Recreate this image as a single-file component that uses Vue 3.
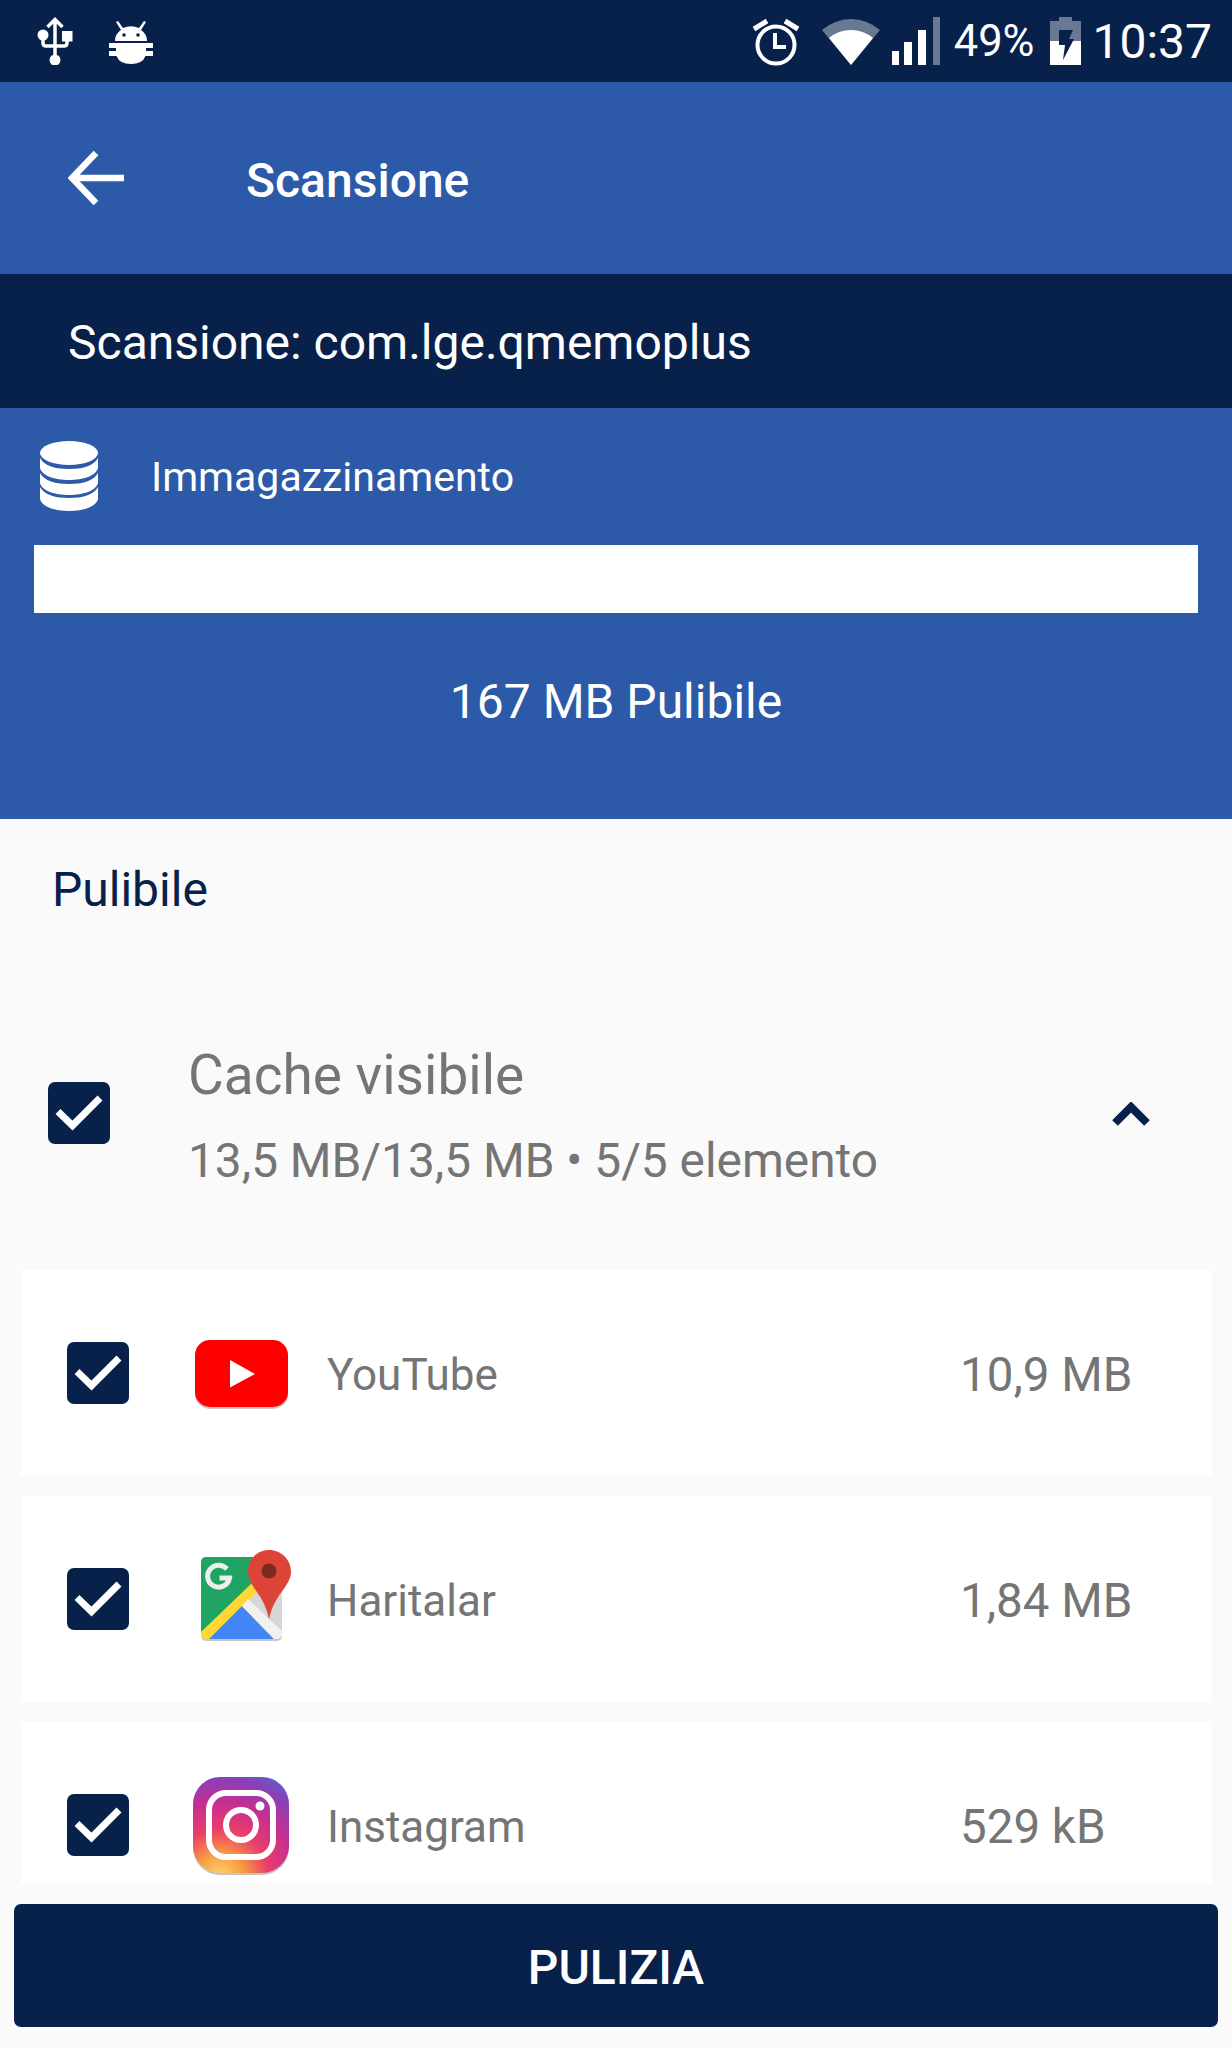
<template>
  <div class="page">
    <div class="status-bar">
      <div class="status-left">
        <svg width="36" height="48" viewBox="0 0 36 48">
          <path d="M18 4v40M10.500 10l7.500-7.500 7.500 7.500M6 20v6q0 3 3 3h18q3 0 3-3v-4" fill="none" stroke="#fff" stroke-width="3.500"/>
          <circle cx="6" cy="18" r="5.500" fill="#fff"/>
          <rect x="25" y="14" width="10.500" height="10.500" fill="#fff"/>
          <circle cx="18" cy="43" r="5.500" fill="#fff"/>
        </svg>
        <svg width="44" height="46" viewBox="0 0 44 46">
          <path d="M9 3l5 7a16 12 0 0 1 16 0l5-7 2 1-5 8q6 4 6 11h-32q0-7 6-11l-5-8z" fill="#fff"/>
          <circle cx="15" cy="17" r="1.800" fill="#08214a"/>
          <circle cx="29" cy="17" r="1.800" fill="#08214a"/>
          <path d="M0 25h44v5h-7v3h7v5h-7.500q-3 8-14.500 8t-14.500-8h-7.500v-5h7v-3h-7z" fill="#fff"/>
        </svg>
      </div>
      <div class="status-right">
        <svg class="ic-alarm" width="48" height="49" viewBox="0 0 48 49">
          <circle cx="24" cy="28" r="18.500" fill="none" stroke="#fff" stroke-width="4"/>
          <path d="M23 16v14h11" fill="none" stroke="#fff" stroke-width="4"/>
          <path d="M2 12l13-8M46 12l-13-8" stroke="#fff" stroke-width="5"/>
        </svg>
        <svg class="ic-wifi" width="58" height="48" viewBox="0 0 58 48">
          <path d="M0 13a44 44 0 0 1 58 0l-29 35z" fill="#fff" fill-opacity="0.4"/>
          <path d="M7 21a34 34 0 0 1 44 0l-22 27z" fill="#fff"/>
        </svg>
        <svg class="ic-signal" width="48" height="48" viewBox="0 0 48 48">
          <rect x="0" y="34" width="7" height="14" fill="#fff"/>
          <rect x="12" y="25" width="8" height="23" fill="#fff"/>
          <rect x="26" y="13" width="8" height="35" fill="#fff"/>
          <rect x="41" y="0" width="7" height="48" fill="#fff" fill-opacity="0.4"/>
        </svg>
        <span class="pct">49%</span>
        <svg class="ic-batt" width="31" height="48" viewBox="0 0 31 48">
          <path d="M9 0h13v4h9v23h-31v-23h9z" fill="#fff" fill-opacity="0.4"/>
          <rect x="0" y="24" width="31" height="24" fill="#fff"/>
          <path d="M9 13h14l-4 9h5l-11 21 2-15h-6z" fill="#08214a"/>
        </svg>
        <span class="clock">10:37</span>
      </div>
    </div>

    <div class="app-bar">
      <svg class="back" width="56" height="56" viewBox="0 0 56 56">
        <path d="M28 3l-24 25 24 25M5 28h51" fill="none" stroke="#fff" stroke-width="6.500"/>
      </svg>
      <div class="app-title">Scansione</div>
    </div>

    <div class="scan-strip">Scansione: com.lge.qmemoplus</div>

    <div class="storage">
      <div class="storage-head">
        <svg width="60" height="70" viewBox="0 0 60 70">
          <ellipse cx="30" cy="12" rx="29" ry="12" fill="#fff"/>
          <path d="M1 17c4 8 16 11 29 11s25-3 29-11v10c-2 8-15 12-29 12s-27-4-29-12z" fill="#fff"/>
          <path d="M1 32c4 8 16 11 29 11s25-3 29-11v10c-2 8-15 12-29 12s-27-4-29-12z" fill="#fff"/>
          <path d="M1 46c4 8 16 11 29 11s25-3 29-11v12c-2 8-15 12-29 12s-27-4-29-12z" fill="#fff"/>
        </svg>
        <span class="storage-label">Immagazzinamento</span>
      </div>
      <div class="progress"></div>
      <div class="cleanable">167 MB Pulibile</div>
    </div>

    <div class="content">
      <div class="section-label">Pulibile</div>

      <div class="group-head">
        <span class="check">
          <svg width="62" height="62" viewBox="0 0 62 62">
            <path d="M10 29.500l14.500 14 27.500-27.500" fill="none" stroke="#fff" stroke-width="7"/>
          </svg>
        </span>
        <div class="group-text">
          <div class="group-title">Cache visibile</div>
          <div class="group-sub">13,5 MB/13,5 MB • 5/5 elemento</div>
        </div>
        <svg class="chevron" width="38" height="24" viewBox="0 0 38 24">
          <path d="M3 21l16-16 16 16" fill="none" stroke="#08214a" stroke-width="8"/>
        </svg>
      </div>

      <div class="list">
        <div v-for="item in items" :key="item.name" class="row">
          <span class="check">
            <svg width="62" height="62" viewBox="0 0 62 62">
              <path d="M10 29.500l14.500 14 27.500-27.500" fill="none" stroke="#fff" stroke-width="7"/>
            </svg>
          </span>
          <div class="app-icon">
            <svg v-if="item.icon === 'youtube'" width="96" height="70" viewBox="0 0 96 70">
              <rect x="2" y="2" width="93" height="67" rx="15" fill="#c9c9c9"/>
              <rect x="2" y="0" width="93" height="67" rx="15" fill="#ff0000"/>
              <path d="M37 20l25 14-25 13.500z" fill="#fff"/>
            </svg>
            <svg v-else-if="item.icon === 'maps'" class="maps" width="100" height="96" viewBox="0 -2 100 96">
              <rect x="8" y="8" width="81" height="82" rx="5" fill="#c8c8c8"/>
              <rect x="8" y="6" width="81" height="82" rx="5" fill="#d6d6d6"/>
              <path d="M13 6h50v26l-55 49v-70a5 5 0 0 1 5-5z" fill="#1fa463"/>
              <path d="M8 81l51-49 5 9-48 47h-3a5 5 0 0 1-5-5z" fill="#fdd835"/>
              <path d="M16 88l33-33 32 33z" fill="#4285f4"/>
              <path d="M49 55l6-7 34 32v3a5 5 0 0 1-5 5h-3z" fill="#f1f1f1"/>
              <path d="M34 18a11 11 0 1 0 2.500 9h-10" fill="none" stroke="#eee" stroke-width="5"/>
              <path d="M76 -1c12 0 22 9.500 22 21.500 0 15-18 24-22 48-4-24-21-33-21-48 0-12 9-21.500 21-21.500z" fill="#db4437"/>
              <circle cx="76" cy="20" r="7.500" fill="#7b2a20"/>
            </svg>
            <svg v-else width="96" height="100" viewBox="0 0 96 100">
              <defs>
                <radialGradient id="ig" cx="0.28" cy="1.05" r="1.2">
                  <stop offset="0" stop-color="#fdd778"/>
                  <stop offset="0.2" stop-color="#f9a03f"/>
                  <stop offset="0.42" stop-color="#ea3e6a"/>
                  <stop offset="0.65" stop-color="#c72f90"/>
                  <stop offset="0.85" stop-color="#8f3db5"/>
                  <stop offset="1" stop-color="#5b5fcf"/>
                </radialGradient>
              </defs>
              <rect x="0" y="2" width="96" height="96" rx="27" fill="#c4c4c4"/>
              <rect x="0" y="0" width="96" height="96" rx="27" fill="url(#ig)"/>
              <rect x="16" y="16" width="64" height="64" rx="17" fill="none" stroke="#fff" stroke-width="6"/>
              <circle cx="48" cy="48" r="15" fill="none" stroke="#fff" stroke-width="6"/>
              <circle cx="67" cy="29" r="4.500" fill="#fff"/>
            </svg>
          </div>
          <span class="row-name">{{ item.name }}</span>
          <span class="row-size">{{ item.size }}</span>
        </div>
      </div>
    </div>

    <div class="footer">
      <button class="clean-btn">PULIZIA</button>
    </div>
  </div>
</template>

<script setup>
const items = [
  { name: 'YouTube', size: '10,9 MB', icon: 'youtube' },
  { name: 'Haritalar', size: '1,84 MB', icon: 'maps' },
  { name: 'Instagram', size: '529 kB', icon: 'instagram' }
]
</script>

<style>
body {
  margin: 0;
  background: #fafafa;
}
</style>

<style scoped>
.page {
  width: 1232px;
  height: 2048px;
  display: flex;
  flex-direction: column;
  overflow: hidden;
  background: #fafafa;
  font-family: Roboto, "Noto Sans", sans-serif;
}

.status-bar {
  height: 82px;
  flex-shrink: 0;
  background: #08214a;
  display: flex;
  align-items: center;
  justify-content: space-between;
  padding: 0 20px 0 37px;
  box-sizing: border-box;
  color: #fff;
}

.status-left {
  display: flex;
  align-items: center;
  gap: 36px;
}

.status-right {
  display: flex;
  align-items: center;
}

.ic-alarm {
  margin-right: 22px;
}

.ic-wifi {
  margin-right: 12px;
}

.pct {
  font-size: 43.500px;
  margin-left: 14px;
  margin-right: 16px;
}

.clock {
  font-size: 48px;
  margin-left: 11px;
}

.app-bar {
  height: 192px;
  flex-shrink: 0;
  background: #2c5aa8;
  display: flex;
  align-items: center;
  padding-left: 68px;
  box-sizing: border-box;
  color: #fff;
}

.back {
  margin-right: 122px;
}

.app-title {
  font-size: 48px;
  font-weight: 500;
  padding-top: 4px;
}

.scan-strip {
  height: 134px;
  flex-shrink: 0;
  background: #08214a;
  color: #fff;
  font-size: 48px;
  display: flex;
  align-items: center;
  padding: 3px 0 0 68px;
  box-sizing: border-box;
}

.storage {
  height: 411px;
  flex-shrink: 0;
  background: #2c5aa8;
  color: #fff;
  padding: 33px 34px 0;
  box-sizing: border-box;
}

.storage-head {
  display: flex;
  align-items: center;
  gap: 52px;
  height: 70px;
  padding-left: 5px;
  font-size: 41px;
  margin-bottom: 34px;
}

.storage-label {
  padding-top: 2px;
}

.progress {
  height: 68px;
  background: #fff;
}

.cleanable {
  text-align: center;
  font-size: 48px;
  margin-top: 60px;
}

.content {
  flex: 1;
  min-height: 0;
  overflow: hidden;
  display: flex;
  flex-direction: column;
}

.section-label {
  color: #08214a;
  font-size: 48px;
  padding: 42px 0 0 52px;
  height: 98px;
  flex-shrink: 0;
}

.group-head {
  display: flex;
  align-items: center;
  height: 311px;
  flex-shrink: 0;
  box-sizing: border-box;
  padding: 0 0 3px 48px;
}

.check {
  width: 62px;
  height: 62px;
  flex-shrink: 0;
  background: #08214a;
  border-radius: 7px;
  display: block;
}

.check svg {
  display: block;
}

.row .check {
  margin-top: -5px;
}

.group-text {
  margin-left: 78px;
  padding-top: 5px;
  flex: 1;
}

.group-title {
  font-size: 55px;
  color: #757575;
  margin-bottom: 26px;
}

.group-sub {
  font-size: 47.800px;
  color: #757575;
}

.chevron {
  margin-right: 82px;
  margin-top: 2px;
}

.list {
  display: flex;
  flex-direction: column;
  gap: 20px;
  padding: 0 20px 0 21px;
}

.row {
  height: 206px;
  flex-shrink: 0;
  background: #fff;
  display: flex;
  align-items: center;
  padding: 4px 0 0 46px;
  box-sizing: border-box;
}

.app-icon {
  width: 96px;
  height: 100px;
  margin-left: 64px;
  flex-shrink: 0;
  display: flex;
  align-items: center;
}

.app-icon svg {
  flex-shrink: 0;
}

.app-icon .maps {
  margin-top: -8px;
}

.row-name {
  margin-left: 38px;
  flex: 1;
  font-size: 44px;
  color: #757575;
}

.row-size {
  width: 252px;
  font-size: 47.500px;
  color: #757575;
}

.footer {
  flex-shrink: 0;
  padding: 21px 14px;
}

.clean-btn {
  display: block;
  width: 100%;
  height: 123px;
  padding: 3px 0 0;
  border: none;
  border-radius: 7px;
  background: #08214a;
  color: #fff;
  font-family: inherit;
  font-size: 48px;
  font-weight: 500;
}
</style>
